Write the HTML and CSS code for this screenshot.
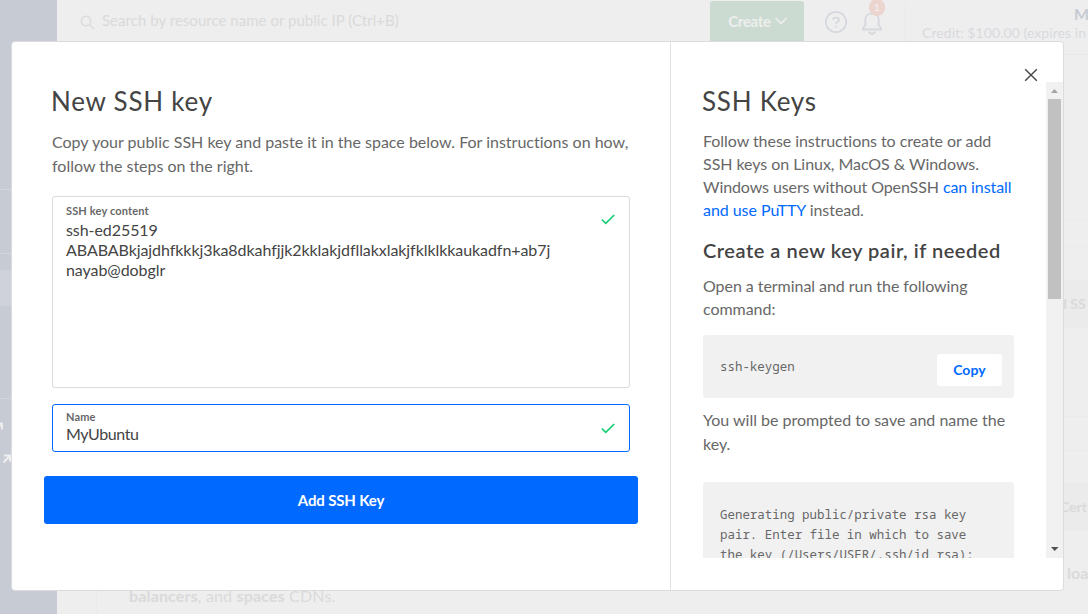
FILE: index.html
```html
<!DOCTYPE html>
<html lang="en">
<head>
<meta charset="utf-8">
<title>New SSH key</title>
<link rel="stylesheet" href="styles.css">
</head>
<body>
<div class="app">
  <nav class="sidebar">
    <div class="side-group side-first"></div>
    <div class="side-group side-second"></div>
    <div class="side-group side-third"><div class="side-active"></div></div>
    <div class="side-group side-links">
      <svg class="ext ext-a" width="10" height="10" viewBox="0 0 10 10"><path d="M2 1.5h6v6M8 1.5L1.5 8.500"/></svg>
      <svg class="ext ext-b" width="10" height="10" viewBox="0 0 10 10"><path d="M2 1.5h6v6M8 1.5L1.5 8.500"/></svg>
    </div>
  </nav>
  <main class="main">
    <header class="topbar">
      <svg class="search-icon" width="16" height="16" viewBox="0 0 16 16"><circle cx="6" cy="6" r="4.700"/><path d="M9.500 9.500l4.500 4.500"/></svg>
      <span class="search-text">Search by resource name or public IP (Ctrl+B)</span>
      <div class="create">Create<svg width="14" height="10" viewBox="0 0 14 10"><path d="M1.500 2L7 7.500 12.500 2"/></svg></div>
      <svg class="help" width="24" height="24" viewBox="0 0 24 24"><circle cx="12" cy="12" r="10.200"/><path d="M9 9.800C9 6.800 15 6.800 15 10c0 2-3 2-3 4M12 15.800v1.800"/></svg>
      <div class="bell"><svg width="22" height="26" viewBox="0 0 22 26"><path d="M4.300 16V11C4.300 2.500 17.700 2.500 17.700 11v5l2.300 3.200V20.500H2V19.200zM8 22.500c.7 3 5.300 3 6 0"/></svg><span class="badge">1</span></div>
      <div class="account"><b class="team">M</b><span class="credit">Credit: $100.00 (expires in 5</span></div>
    </header>
    <div class="rows">
      <div class="row r1"></div>
      <div class="row r2"></div>
      <div class="row r3"></div>
      <div class="row band"><b class="row-ssh">d SS</b></div>
      <div class="row r4"></div>
      <div class="row r5"></div>
      <div class="row r6"></div>
      <div class="row band"><b class="row-cert">Cert</b></div>
    </div>
    <div class="card-foot">
      <div class="foot-load"><b>loa</b></div>
      <div class="foot-text"><b>balancers</b>, and <b>spaces</b> CDNs.</div>
    </div>
  </main>
</div>

<div class="modal">
  <section class="form-pane">
    <h1 class="title">New SSH key</h1>
    <p class="intro"><span class="line">Copy your public SSH key and paste it in the space below. For instructions on how,</span><span class="line">follow the steps on the right.</span></p>
    <div class="field content-field">
      <div class="field-body">
        <div class="label">SSH key content</div>
        <div class="value"><span class="line">ssh-ed25519</span><span class="line">ABABABkjajdhfkkkj3ka8dkahfjjk2kklakjdfllakxlakjfklklkkaukadfn+ab7j</span><span class="line">nayab@dobglr</span></div>
      </div>
      <svg class="check" width="14" height="11" viewBox="0 0 14 11"><path d="M.8 5.500L4.800 9.300 13.200 1"/></svg>
    </div>
    <div class="field name-field">
      <div class="field-body">
        <div class="label">Name</div>
        <div class="value name-value">MyUbuntu</div>
      </div>
      <svg class="check" width="14" height="11" viewBox="0 0 14 11"><path d="M.8 5.500L4.800 9.300 13.200 1"/></svg>
    </div>
    <div class="submit"><span>Add SSH Key</span></div>
  </section>
  <aside class="help-pane">
    <div class="close-row"><svg width="14" height="14" viewBox="0 0 14 14"><path d="M1.200 1.200l11.600 11.600M12.800 1.200L1.200 12.800"/></svg></div>
    <div class="scroller">
      <div class="help-content">
        <h2 class="title">SSH Keys</h2>
        <p class="para"><span class="line">Follow these instructions to create or add</span><span class="line">SSH keys on Linux, MacOS &amp; Windows.</span><span class="line tight">Windows users without OpenSSH <a>can install</a></span><span class="line"><a>and use PuTTY</a> instead.</span></p>
        <h3 class="sub">Create a new key pair, if needed</h3>
        <p class="para open"><span class="line">Open a terminal and run the following</span><span class="line">command:</span></p>
        <div class="code cmd"><span>ssh-keygen</span><span class="copy">Copy</span></div>
        <p class="para prompt"><span class="line">You will be prompted to save and name the</span><span class="line">key.</span></p>
        <div class="code output"><span class="line">Generating public/private rsa key</span><span class="line">pair. Enter file in which to save</span><span class="line">the key (/Users/USER/.ssh/id_rsa):</span></div>
      </div>
      <div class="scrollbar">
        <svg width="17" height="17" viewBox="0 0 17 17"><path class="up" d="M5 11l3.500-4L12 11z"/></svg>
        <div class="thumb"></div>
        <svg class="down-btn" width="17" height="17" viewBox="0 0 17 17"><path class="down" d="M5 6h7.500L8.700 10z"/></svg>
      </div>
    </div>
  </aside>
</div>
</body>
</html>
```
FILE: styles.css
```css
* { box-sizing: border-box; }
html, body { margin: 0; width: 1088px; height: 614px; overflow: hidden; }
body { font-family: Lato, "Liberation Sans", sans-serif; font-size: 16px; font-variant-ligatures: none; color: #676767; position: relative; }
h1, h2, h3, p { margin: 0; font-weight: 400; }
svg { fill: none; flex: none; display: block; }
.line { display: block; white-space: nowrap; }

/* page behind the dialog */
.app { display: flex; height: 614px; background: #eee; color: #dadada; }
.sidebar { width: 57px; flex: none; background: #c7cbd4; }
.side-group { border-bottom: 1px solid #d2d5dd; }
.side-first { height: 190px; }
.side-second { height: 64px; }
.side-third { height: 145px; padding-top: 16px; }
.side-active { height: 36px; background: #cfd2db; }
.side-links { border: 0; padding-top: 23px; }
.ext { stroke: #eee; stroke-width: 2; }
.ext-a { margin-left: -6px; }
.ext-b { margin: 22px 0 0 2px; }
.main { flex: 1; min-width: 0; overflow: hidden; }
.topbar { height: 55px; border-bottom: 1px solid #e9e9e9; display: flex; align-items: flex-start; white-space: nowrap; }
.search-icon { margin: 15px 0 0 23px; stroke: #dcdcdc; stroke-width: 1.6; }
.search-text { flex: none; margin: 10px 0 0 6px; width: 608px; line-height: 20px; font-size: 15px; letter-spacing: .03px; }
.create { flex: none; width: 94px; height: 50px; margin-top: 1px; padding: 0 0 11px 2px; display: flex; align-items: center; justify-content: center; gap: 3px; background: #cbdbd1; color: #eee; border-radius: 3px; font-weight: 700; font-size: 15px; letter-spacing: -.3px; }
.create svg { stroke: #eee; stroke-width: 1.7; }
.help { margin: 10px 0 0 20px; stroke: #d5d8de; stroke-width: 1.8; }
.bell { position: relative; margin: 9px 0 0 13px; }
.bell svg { stroke: #d5d8de; stroke-width: 1.8; }
.badge { position: absolute; left: 8px; top: -10px; width: 16px; height: 17px; border-radius: 8px; background: #ecd4cf; color: #f3eeee; font-size: 10px; font-weight: 700; line-height: 17px; text-align: center; }
.account { margin: 3px 0 0 22px; height: 38px; border-left: 1px solid #e9e9e9; padding-left: 16px; flex: none; }
.team { display: block; margin-left: 152px; line-height: 22px; color: #c7cbd4; }
.credit { display: block; font-size: 14px; line-height: 16px; color: #d8dade; letter-spacing: .07px; }
.row { border-bottom: 1px solid #eaeaea; }
.r1 { height: 166px; }
.r2 { height: 26px; }
.r3 { height: 33px; border: 0; }
.band { height: 48px; background: #ebebeb; border: 0; line-height: 48px; font-size: 14px; white-space: nowrap; }
.row-ssh { margin-left: 1002px; }
.row-cert { margin-left: 1003px; }
.r4 { height: 89px; }
.r5 { height: 34px; }
.r6 { height: 32px; border: 0; }
.card-foot { margin-left: 39px; border-left: 1px solid #eaeaea; height: 83px; padding-top: 32px; }
.foot-load { padding-left: 970px; line-height: 20px; }
.foot-text { padding-left: 32px; margin-top: 3px; line-height: 20px; letter-spacing: .16px; }

/* dialog */
.modal { position: absolute; left: 11px; top: 41px; width: 1053px; height: 550px; display: flex; background: #fff; border: 1px solid #dcdcdf; border-radius: 4px; overflow: hidden; }
.form-pane { width: 659px; flex: none; border-right: 1px solid #e2e2e2; padding: 41px 40px 0; }
.title { font-size: 26px; line-height: 36px; color: #444; white-space: nowrap; letter-spacing: .75px; margin-left: -1px; }
.intro { margin-top: 11px; line-height: 24px; }
.field { display: flex; justify-content: space-between; width: 578px; border: 1px solid #dcdcdc; border-radius: 3px; padding: 0 14px 0 13px; color: #444; }
.field-body { min-width: 0; }
.content-field { height: 192px; margin-top: 18px; padding-top: 7px; }
.content-field .check { margin-top: 10px; }
.label { font-size: 11px; font-weight: 700; line-height: 14px; color: #676767; white-space: nowrap; letter-spacing: .15px; }
.content-field .value { margin-top: 2px; line-height: 20px; letter-spacing: -.07px; }
.check { stroke: #15cd72; stroke-width: 1.7; }
.name-field { height: 48px; margin-top: 16px; border-color: #0069ff; padding-top: 5px; }
.name-field .check { margin-top: 13px; }
.name-field .value { line-height: 20px; margin-top: 0; letter-spacing: -.4px; }
.submit { margin: 24px -8px 0; width: 594px; height: 48px; background: #0069ff; border-radius: 3px; color: #fff; font-size: 15px; font-weight: 700; line-height: 48px; text-align: center; white-space: nowrap; letter-spacing: -.15px; }

.help-pane { flex: 1; min-width: 0; }
.close-row { height: 40px; padding: 26px 25px 0 0; display: flex; justify-content: flex-end; }
.close-row svg { stroke: #444; stroke-width: 1.4; }
.scroller { height: 476px; display: flex; overflow: hidden; }
.help-content { width: 375px; flex: none; padding: 1px 32px 0; }
.para { line-height: 23px; margin-top: 10px; letter-spacing: -.05px; }
.tight { letter-spacing: -.1px; }
a { color: #0069ff; }
.sub { margin-top: 14px; font-size: 20px; font-weight: 600; line-height: 30px; color: #444; white-space: nowrap; letter-spacing: .53px; }
.para.open { margin-top: 9px; }
.code { width: 311px; background: #f1f1f1; border-radius: 3px; font-family: "Noto Sans Mono", "DejaVu Sans Mono", monospace; font-size: 12.45px; line-height: 20px; padding: 0 12px 0 17px; }
.cmd { height: 63px; margin-top: 15px; display: flex; justify-content: space-between; padding-top: 22px; }
.copy { width: 65px; height: 32px; margin-top: -3px; border-radius: 3px; background: #fff; color: #0069ff; font: 700 14px/31px Lato, "Liberation Sans", sans-serif; letter-spacing: .1px; text-align: center; }
.para.prompt { margin-top: 10px; line-height: 24px; letter-spacing: 0; }
.output { height: 120px; margin-top: 26px; padding-top: 23px; }
.scrollbar { width: 17px; background: #f1f1f1; display: flex; flex-direction: column; flex: none; }
.thumb { width: 13px; height: 200px; margin-left: 2px; background: #c1c1c1; }
.down-btn { margin-top: auto; }
.up { fill: #a3a3a3; }
.down { fill: #505050; }
```
